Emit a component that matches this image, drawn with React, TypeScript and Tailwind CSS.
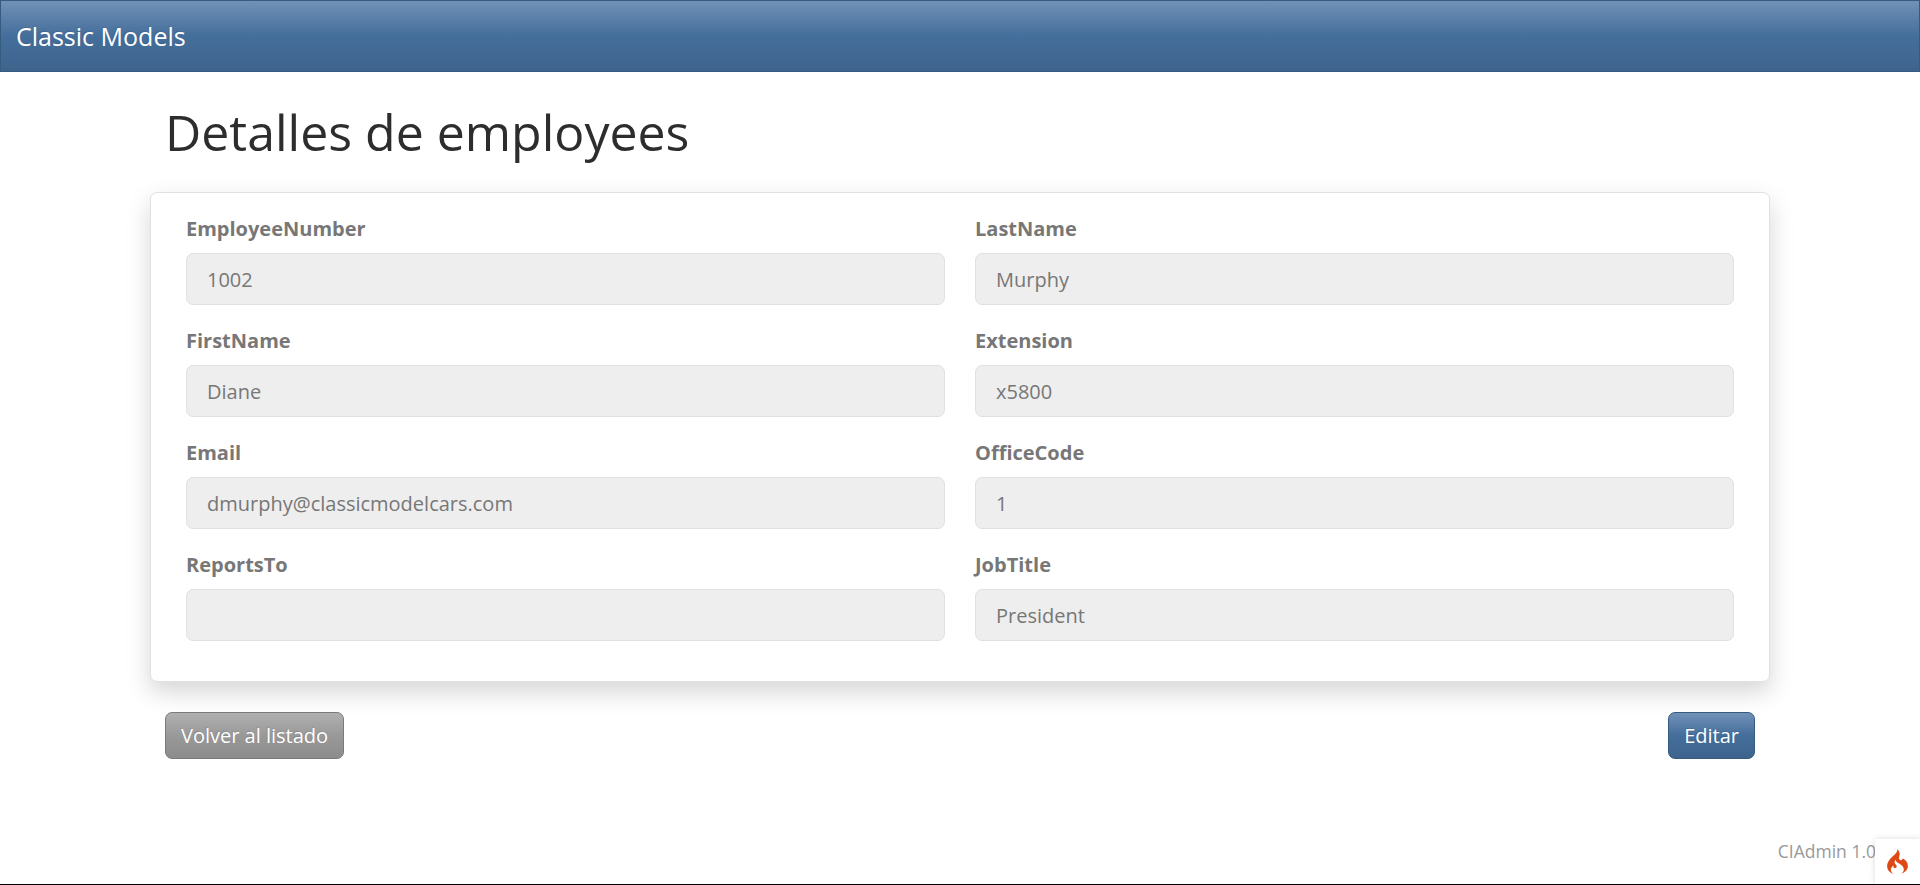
import { SiCodeigniter } from "react-icons/si";

const fields = [
  { label: "EmployeeNumber", value: "1002" },
  { label: "LastName", value: "Murphy" },
  { label: "FirstName", value: "Diane" },
  { label: "Extension", value: "x5800" },
  { label: "Email", value: "dmurphy@classicmodelcars.com" },
  { label: "OfficeCode", value: "1" },
  { label: "ReportsTo", value: "" },
  { label: "JobTitle", value: "President" },
];

export default function App() {
  return (
    <div className="flex h-[885px] flex-col overflow-hidden border-b border-black bg-white font-['Open_Sans',sans-serif] text-[20px] leading-[30px] text-[#777]">
      <nav className="flex h-[72px] shrink-0 items-center border border-[#375a7f] bg-[linear-gradient(180deg,#7191b7,#446e9b_50%,#3e648d)] px-[15px]">
        <a className="text-[25px] text-white [text-shadow:-1px_-1px_0_rgba(0,0,0,0.1)]">Classic Models</a>
      </nav>
      <main className="mx-auto w-[1620px]">
        <h1 className="mt-[30px] px-[15px] text-[50px] leading-[60px] text-[#2d2d2d]">Detalles de employees</h1>
        <section className="mt-[30px] grid h-[490px] grid-cols-2 content-start gap-x-[30px] gap-y-5 rounded-[7px] border border-[#dee2e6] bg-white px-[35px] pt-[21px] shadow-[0_10px_25px_rgba(0,0,0,0.17)]">
          {fields.map(({ label, value }) => (
            <div key={label}>
              <label className="mb-[9px] block font-bold">{label}</label>
              <div className="mb-px flex h-[52px] items-center rounded-[7px] border border-[#dee2e6] bg-[#eee] px-[20px] pt-[2px]">{value}</div>
            </div>
          ))}
        </section>
        <div className="mt-[30px] flex justify-between px-[15px]">
          <button className="h-[47px] rounded-[7px] border border-[#7a7a7a] bg-[linear-gradient(180deg,#b0b0b0,#999_50%,#8c8c8c)] px-[15px] text-white [text-shadow:-1px_-1px_0_rgba(0,0,0,0.1)]">Volver al listado</button>
          <button className="h-[47px] rounded-[7px] border border-[#375a7f] bg-[linear-gradient(180deg,#7191b7,#446e9b_50%,#3e648d)] px-[15px] text-white [text-shadow:-1px_-1px_0_rgba(0,0,0,0.1)]">Editar</button>
        </div>
      </main>
      <footer className="mt-auto flex justify-end">
        <small className="-mr-px mt-[-3px] text-[17.5px] leading-[30px] text-[#999]">CIAdmin 1.0</small>
        <a className="relative flex h-[45px] w-[45px] items-center justify-center bg-white shadow-[0_0_6px_rgba(0,0,0,0.15)]">
          <SiCodeigniter className="size-[25px] text-[#dd4814]" />
        </a>
      </footer>
    </div>
  );
}
